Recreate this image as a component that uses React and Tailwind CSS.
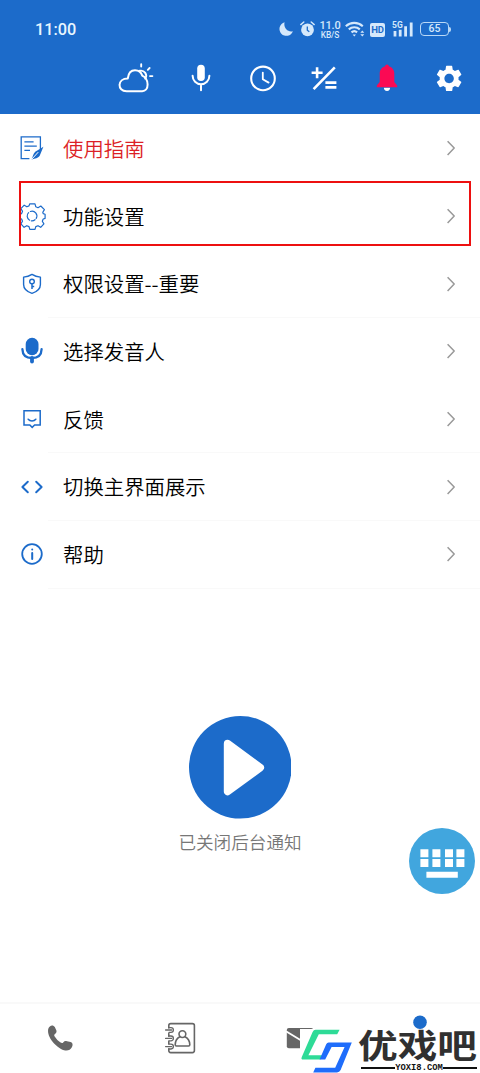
import React from "react";

const FONT = "font-['Noto_Sans_CJK_SC',sans-serif]";

// every icon is drawn around the centre of a 40x40 box
const Icon = ({ children, className = "" }) => (
  <svg
    viewBox="-20 -20 40 40"
    className={`w-10 h-10 shrink-0 overflow-visible ${className}`}
    fill="none"
    stroke="currentColor"
    strokeLinecap="round"
    strokeLinejoin="round"
  >
    {children}
  </svg>
);

const GEAR =
  "M19.14 12.94c.04-.3.06-.61.06-.94 0-.32-.02-.64-.07-.94l2.03-1.58c.18-.14.23-.41.12-.61l-1.92-3.32c-.12-.22-.37-.29-.59-.22l-2.39.96c-.5-.38-1.03-.7-1.62-.94l-.36-2.54c-.04-.24-.24-.41-.48-.41h-3.84c-.24 0-.43.17-.47.41l-.36 2.54c-.59.24-1.13.57-1.62.94l-2.39-.96c-.22-.08-.47 0-.59.22L2.74 8.87c-.12.21-.08.47.12.61l2.03 1.58c-.05.3-.09.63-.09.94s.02.64.07.94l-2.03 1.58c-.18.14-.23.41-.12.61l1.92 3.32c.12.22.37.29.59.22l2.39-.96c.5.38 1.03.7 1.62.94l.36 2.54c.05.24.24.41.48.41h3.84c.24 0 .44-.17.47-.41l.36-2.54c.59-.24 1.13-.56 1.62-.94l2.39.96c.22.08.47 0 .59-.22l1.92-3.32c.12-.22.07-.47-.12-.61l-2.01-1.58zM12 15.6c-1.98 0-3.6-1.62-3.6-3.6s1.62-3.6 3.6-3.6 3.6 1.62 3.6 3.6-1.62 3.6-3.6 3.6z";

const StatusBar = () => (
  <div className="flex items-center h-[58px] pl-[35px] pr-[29px] font-[Roboto,sans-serif] text-[#e8f6ff]">
    <span className="pt-[2px] text-[16.3px] font-medium leading-none">
      11:00
    </span>
    <div className="flex items-center ml-auto text-[#d5e8fb]">
      <svg viewBox="0 0 14 14" className="w-[14px] h-[14px]" fill="currentColor">
        <path d="M5.6.3A6.9 6.9 0 1 0 13.9 9.2C8.8 10.6 4.2 6 5.6.3z" />
      </svg>
      <svg viewBox="0 0 15 16" className="w-[15px] h-4 ml-[7px]" fill="currentColor">
        <circle cx="7.5" cy="8.8" r="6.4" />
        <path
          d="M.8 3.6 3.8 1M14.2 3.6 11.2 1"
          stroke="currentColor"
          strokeWidth="1.4"
          strokeLinecap="round"
        />
        <path d="M7.3 5.6v3.6l2 1.6" fill="none" stroke="#1c6bca" strokeWidth="1.3" />
      </svg>
      <div className="w-[20px] ml-[5px] pt-[2px] flex flex-col items-center whitespace-nowrap font-medium">
        <span className="text-[11px] leading-[10px] tracking-[-0.2px]">11.0</span>
        <span className="text-[8.4px] leading-[8px] tracking-[-0.1px]">KB/S</span>
      </div>
      <svg
        viewBox="0 0 21 16"
        className="w-[21px] h-4 ml-[5px]"
        fill="none"
        stroke="currentColor"
        strokeWidth="2.1"
      >
        <path d="M.8 5.2a12.6 12.6 0 0 1 17 0M3.8 8.4a8.2 8.2 0 0 1 11 0M6.5 11.4a4.2 4.2 0 0 1 5.6 0" />
        <path
          d="m9.3 15.4-1.7-2h3.4zM17.3 9.4l2 2.4h-4zM17.3 15.6l2-2.4h-4z"
          fill="currentColor"
          stroke="none"
        />
      </svg>
      <div className="w-[15px] h-[14px] ml-1 mt-px rounded-[2px] bg-[#d5e8fb] text-[#1c6bca] text-[9.5px] font-bold leading-[14.5px] text-center tracking-[-0.3px]">
        HD
      </div>
      <svg viewBox="0 0 23 16" className="w-[23px] h-4 ml-[7px]" fill="currentColor">
        <text x="0" y="7" fontSize="8.5" fontWeight="700">
          5G
        </text>
        <path d="M1.6 10h2.8v5.4H1.6zM6.8 8.8h2.8v6.6H6.8zM12.2 5.2H15v10.2h-2.8zM17.8 1.4h2.8v14h-2.8z" />
      </svg>
      <div className="flex items-center ml-[5px]">
        <div className="w-[29px] h-[14px] rounded-[4px] border border-[#b9d8f6] text-[10.5px] leading-[12.5px] font-medium text-center">
          65
        </div>
        <div className="w-[2px] h-[5px] rounded-r-sm bg-[#b9d8f6]" />
      </div>
    </div>
  </div>
);

const Toolbar = () => (
  <div className="flex pl-[116px] text-white">
    <Icon>
      <path
        d="M-9.4 13.2C-19 13.2-19 .4-8.2.4-7.6-5-4.8-7.8-1-7.8c3.6 0 6.2 1.8 7.2 5.4C10-.8 11.6 2.6 11.6 6.6c0 4-2.2 6.6-5.4 6.6z"
        strokeWidth="2"
      />
      <path
        d="M3.6-7.2C8.4-8.2 12-3.4 9.2.6M5.2-13.8v2.4M13.6-10 11.8-8.2M14-1.9h2.4"
        strokeWidth="1.9"
      />
    </Icon>
    <Icon className="ml-[25px]">
      <rect x="-3.8" y="-13.2" width="7.6" height="16.2" rx="3.8" fill="currentColor" stroke="none" />
      <path d="M-8.4-2.2a8.4 8.4 0 0 0 16.8 0M0 6.4v5.9" strokeWidth="2" />
    </Icon>
    <Icon className="ml-[21.6px]">
      <circle r="11.8" cy=".4" strokeWidth="2.1" />
      <path d="M-.2-5.4V1.2L5.6 4.6" strokeWidth="1.8" />
    </Icon>
    <Icon className="ml-[21.8px]">
      <path
        d="M-12.4-5.3h11M-6.9-10.8v11M-10.4 11.2 10.8-10.6M1.4 4.6h11M1.4 9.4h11"
        strokeWidth="2.6"
        strokeLinecap="butt"
      />
    </Icon>
    <Icon className="ml-[22.4px]">
      <path d="M-3.1 9.8h6.2a3.1 3.1 0 0 1-6.2 0z" fill="#fff" stroke="none" />
      <path
        d="M0-13.4c1.2 0 1.7.8 1.8 1.7C5.2-10.8 7.3-8 7.3-4.2V4l2.9 3.4v1.8h-20.4V7.4L-7.3 4v-8.2c0-3.8 2.1-6.6 5.5-7.5.1-.9.6-1.7 1.8-1.7z"
        fill="#fb0a54"
        stroke="none"
      />
    </Icon>
    <Icon className="ml-[22.6px]">
      <path d={GEAR} fill="currentColor" stroke="none" transform="translate(-15.6 -15.3) scale(1.31)" />
    </Icon>
  </div>
);

const icons = {
  guide: (
    <Icon>
      <path
        d="M8.4 1v-12.2h-19.2v21.8h8.2M-7.6-6.2h9.2M-7.6-1.9H4.8M-7.6 2.4h5.6"
        strokeWidth="1.3"
        strokeLinecap="butt"
        strokeLinejoin="miter"
      />
      <path
        d="M11.4-1.2 3.2 3.8C1 6 1 8.4-.4 11.4 3.4 10.4 6 10.2 7.6 8z"
        fill="currentColor"
        stroke="none"
      />
      <path d="M0 11 6 4.4" stroke="#fff" strokeWidth="1" />
    </Icon>
  ),
  settings: (
    <Icon>
      <path
        d="M-2.6-12.2h5.2l.8 3 2.2.9 2.8-1.7L12-6.4l-1.6 2.7.4 1.3 1.9.6v4.2l-1.9.6-.9 2.3 1.6 2.6-3.2 3.4-2.7-1.6-2.2.9-.8 2.8h-5.2l-.8-2.8-2.2-.9-2.7 1.6-3.2-3.4L-9.9 5.3l-.9-2.3-1.7-.6v-4.2l1.7-.6.9-2.3-1.6-2.7 3.3-3.4 2.7 1.6 2.1-.9z"
        strokeWidth="1.2"
        transform="translate(.4)"
      />
      <path d="M-2.4 4.2A4.8 4.8 0 0 1-3.4-3.4M-1.6-4.5A4.8 4.8 0 0 1 4.2 2.4M3 3.7A4.8 4.8 0 0 1-.6 4.8" strokeWidth="1.2" />
    </Icon>
  ),
  permission: (
    <Icon>
      <path
        d="M0-9.6C2.5-8 5.5-7.1 8.4-6.9v7.4C8.4 4.8 4.8 7.8 0 9.4-4.8 7.8-8.4 4.8-8.4.5v-7.4C-5.5-7.1-2.5-8 0-9.6z"
        strokeWidth="1.4"
      />
      <circle cy="-2.5" r="2.3" strokeWidth="1.4" />
      <path d="M0 0v5M.2 2.5h2" strokeWidth="1.5" strokeLinecap="butt" />
    </Icon>
  ),
  voice: (
    <Icon>
      <rect x="-6.3" y="-13.2" width="12.8" height="17.4" rx="6.3" fill="currentColor" stroke="none" />
      <path d="M-9.6-1.8C-9.4 4.2-5.4 7 0 7s9.4-2.8 9.6-8.8" strokeWidth="2.3" />
      <path d="M0 7v3.6" strokeWidth="3.8" />
    </Icon>
  ),
  feedback: (
    <Icon>
      <path d="M-8-8.2H8.2V6H2.6L.2 8.4-2.2 6H-8z" strokeWidth="1.5" strokeLinejoin="miter" />
      <path d="M-3.8.2C-2 2.5 2 2.5 3.8.2" strokeWidth="1.5" />
    </Icon>
  ),
  layout: (
    <Icon>
      <path d="m-4.2-5.2-5.4 5.2 5.4 5.2M4.2-5.2 9.6 0 4.2 5.2" strokeWidth="2" />
    </Icon>
  ),
  help: (
    <Icon>
      <circle r="9.8" strokeWidth="1.8" />
      <path d="M.2-1v6M.2-4.6v.2" strokeWidth="2" />
    </Icon>
  ),
};

const menu = [
  { icon: "guide", label: "使用指南", color: "text-[#dc1f26]" },
  { icon: "settings", label: "功能设置", active: true },
  { icon: "permission", label: "权限设置--重要", line: true },
  { icon: "voice", label: "选择发音人" },
  { icon: "feedback", label: "反馈", line: true },
  { icon: "layout", label: "切换主界面展示", line: true },
  { icon: "help", label: "帮助", line: true },
];

const MenuRow = ({ icon, label, color = "text-black", active, line }) => (
  <div className="relative flex items-center h-[67.7px] pl-3 pr-[9px]">
    <div className="text-[#1c6bca] flex">{icons[icon]}</div>
    <span className={`ml-[11px] text-[20.4px] font-[350] leading-none ${color}`}>
      {label}
    </span>
    <Icon className="ml-auto text-[#999]">
      <path d="m-3.4-6.8 6.6 6.9-6.6 6.9" strokeWidth="1.5" strokeLinecap="butt" />
    </Icon>
    {line && <div className="absolute left-12 right-0 -bottom-[0.5px] h-px bg-[#f9f9f9]" />}
    {active && (
      <div className="absolute left-[18.5px] right-[9px] -top-[1px] h-[65px] border-2 border-[#ed1010]" />
    )}
  </div>
);

const TabBar = () => (
  <div className="flex items-center h-[71px] pb-[2px] border-t-2 border-[#f9f9f9] text-[#666]">
    <div className="w-[120px] flex justify-center">
      <Icon>
        <path
          d="M-11.8-9c1.2-4 5-4.6 6.6-2l1.6 3.6c.4 1.6-.2 2.5-1.4 3.4-1 .8-.9 1.6-.3 2.6C-3.6 1.2-1.8 3 .6 4.6c1.2.8 2 .6 2.8-.4 1-1.2 2-1.4 3.6-.9l3.6.8c2.3.9 2.4 2.9 1.4 4.9-1.5 3-4.6 4.3-8 3.2C-3.6 9.8-13.4-.9-11.8-9z"
          fill="currentColor"
          stroke="none"
        />
      </Icon>
    </div>
    <div className="w-[120px] flex justify-center">
      <Icon>
        <path
          d="M-11.2-10v-2.4q0-2 2-2h21.6q2 0 2 2v25q0 2-2 2H-9.2q-2 0-2-2v-1.8M-11.2-4.4v2.6M-11.2 3.4V6"
          strokeWidth="1.6"
        />
        <path
          d="M-14.4-8h6M-14.4.4h6M-14.4 8.6h6M-11-10.4h2a2.4 2.4 0 0 1 0 4.8h-2M-11-2h2a2.4 2.4 0 0 1 0 4.8h-2M-11 6.2h2a2.4 2.4 0 0 1 0 4.8h-2"
          strokeWidth="1.3"
        />
        <circle cx="2.4" cy="-3.9" r="3.4" strokeWidth="1.6" />
        <path
          d="M-.2-1.2C-3.2.4-4.8 3-4.8 6.8q0 1.2 1.2 1.2H8.6q1.2 0 1.2-1.2c0-3.8-1.8-6.4-4.8-8"
          strokeWidth="1.6"
        />
      </Icon>
    </div>
    <div className="w-[120px] flex justify-center">
      <Icon>
        <rect x="-13.2" y="-10" width="26.4" height="20.2" rx="2" fill="currentColor" stroke="none" />
        <path d="M-13.2-6.2 0 1.8 13.2-6.2" stroke="#fff" strokeWidth="1.8" />
      </Icon>
    </div>
    <div className="w-[120px] flex justify-center">
      <Icon>
        <circle cy="-15.8" r="6.8" className="fill-[#1c6bca]" stroke="none" />
      </Icon>
    </div>
  </div>
);

const Watermark = () => (
  <div className="absolute right-[3px] bottom-0 flex">
    <svg viewBox="300 1029 58 44" className="w-[58px] h-[44px]">
      <path d="M300 1029h52v44h-52z" fill="#fff" />
      <path
        d="M315.6 1029.8H339.6L337.2 1034.2H318.8L308.4 1055.2H322.4L320.4 1059.6H303.4Q300.6 1059.6 301.8 1057L312.6 1032Q313.6 1029.8 315.6 1029.8z"
        fill="#2edb97"
      />
      <path
        d="M328.6 1042.4H351.8L340.6 1070Q339.4 1072.4 337 1072.4H313.2L315.4 1067.8H335.2L344.6 1047H331.6L325.2 1059.6H319.6L326.2 1044.2Q327 1042.4 328.6 1042.4z"
        fill="#1f6dfb"
      />
    </svg>
    <div className="w-[119px] h-[44px] flex flex-col justify-end">
      <span className="w-[102px] mb-[4px] text-[34px] leading-[33px] font-bold text-[#303030] whitespace-nowrap origin-bottom-left scale-x-[1.167] scale-y-[0.98]">
        优戏吧
      </span>
      <div className="flex items-center h-[9px] pl-[3px] pb-px">
        <div className="flex-1 h-[2px] bg-[#111]" />
        <span className="text-[8.8px] leading-[9px] font-bold text-[#111] font-['Liberation_Mono',monospace]">
          YOXI8.COM
        </span>
        <div className="flex-1 h-[2px] bg-[#111]" />
      </div>
    </div>
  </div>
);

const App = () => {
  return (
    <div className={`relative w-[480px] h-[1073px] flex flex-col overflow-hidden bg-white ${FONT}`}>
      <header className="h-[114.4px] shrink-0 bg-[#1c6bca]">
        <StatusBar />
        <Toolbar />
      </header>

      <main className="flex-1 flex flex-col">
        {menu.map((item) => (
          <MenuRow key={item.icon} {...item} />
        ))}

        <div className="flex flex-col items-center mt-[128.2px]">
          <svg viewBox="0 0 102 102" className="w-[102.6px] h-[102.6px]">
            <circle cx="51" cy="51" r="51" className="fill-[#1c6bca]" />
            <path
              d="M38.4 27.5 70.8 51.3 38.4 75.1z"
              fill="#fff"
              stroke="#fff"
              strokeWidth="7.6"
              strokeLinejoin="round"
            />
          </svg>
          <p className="mt-[12.6px] text-[17.6px] leading-[20px] font-[350] text-[#777]">
            已关闭后台通知
          </p>
        </div>
      </main>

      <TabBar />
      <Watermark />

      {/* floating keyboard button */}
      <button className="absolute left-[409px] top-[828px] w-[66px] h-[66px] rounded-full bg-[#41a6de]">
        <svg viewBox="0 0 66 66" className="w-full h-full" fill="#fff">
          <path d="M11.4 21.2h8v8h-8zM23.4 21.2h8v8h-8zM36 21.2h8v8h-8zM47.4 21.2h8v8h-8zM11.4 31h8v8h-8zM23.4 31h8v8h-8zM36 31h8v8h-8zM47.4 31h8v8h-8zM17.4 43.8h31.4v6H17.4z" />
        </svg>
      </button>
    </div>
  );
};

export default App;
